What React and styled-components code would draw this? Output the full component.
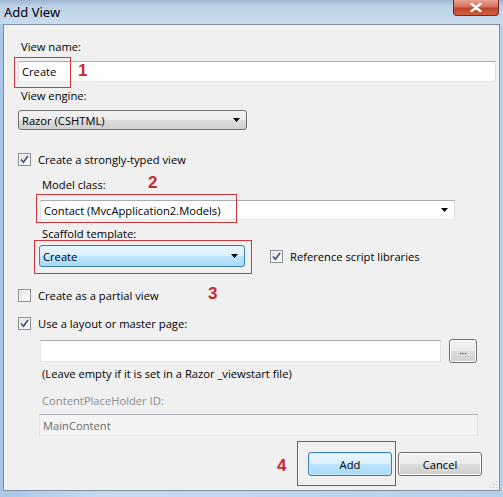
import React from 'react';
import styled, { createGlobalStyle, css } from 'styled-components';

const GlobalStyle = createGlobalStyle`
  html, body {
    margin: 0;
    padding: 0;
    background: #bcd2ea;
  }
  body {
    font-family: "Open Sans", "Noto Sans", sans-serif;
    font-size: 11.2px;
    color: #000;
  }
`;

const Window = styled.div`
  position: relative;
  width: 503px;
  height: 497px;
  display: flex;
  flex-direction: column;
  background: linear-gradient(90deg, #a9c6e6 0%, #c6daef 20%, #bfd5ec 60%, #b6cfe9 100%);
  overflow: hidden;
`;

const TitleBar = styled.div`
  height: 24px;
  display: flex;
  align-items: center;
  justify-content: space-between;
  padding-left: 4px;
  background: linear-gradient(180deg, #9fb5cf 0px, #bcd1e8 6px, #cadcf0 24px);
`;

const Title = styled.span`
  font-family: "Noto Sans", "Open Sans", sans-serif;
  font-size: 13px;
  margin-top: -1px;
`;

const CloseButton = styled.div`
  align-self: flex-start;
  width: 44px;
  height: 15px;
  margin-right: 4px;
  border: 1px solid #6b2a22;
  border-top: none;
  border-radius: 0 0 4px 4px;
  background: linear-gradient(180deg, #e8a393 0%, #d4735f 45%, #c0452d 55%, #d2603f 100%);
  display: flex;
  align-items: center;
  justify-content: center;
`;

const Panel = styled.div`
  position: relative;
  margin: 0 3px 6px 3px;
  flex: 1;
  border: 1px solid #7f8fa2;
  background: #f0f0f0;
  padding: 15px 14px 0 14px;
  display: flex;
  flex-direction: column;
`;

const Label = styled.div`
  height: 14px;
  line-height: 14px;
  margin-top: ${p => p.$top || 0}px;
  margin-left: ${p => (p.$indent ? 24 : 3)}px;
  color: ${p => (p.$disabled ? '#8d8d8d' : '#000')};
  white-space: nowrap;
`;

const TextBox = styled.div`
  box-sizing: border-box;
  height: ${p => p.$h || 21}px;
  width: ${p => p.$w}px;
  margin-top: ${p => p.$top || 0}px;
  margin-left: ${p => p.$left || 0}px;
  border: 1px solid #abadb3;
  border-color: #abadb3 #dbdfe6 #e3e9ef #e2e3ea;
  background: ${p => (p.$disabled ? '#f4f4f4' : '#fff')};
  color: ${p => (p.$disabled ? '#6d6d6d' : '#000')};
  display: flex;
  align-items: center;
  justify-content: space-between;
  padding: 0 6px 0 3px;
  white-space: nowrap;
`;

const Select = styled.div`
  box-sizing: border-box;
  height: ${p => p.$h || 21}px;
  width: ${p => p.$w}px;
  margin-top: ${p => p.$top || 0}px;
  margin-left: ${p => p.$left || 0}px;
  border-radius: 3px;
  display: flex;
  align-items: center;
  justify-content: space-between;
  padding: 0 6px 0 3px;
  ${p =>
    p.$active
      ? css`
          border: 1px solid #3c7fb1;
          background: linear-gradient(180deg, #eaf6fd 0%, #d9f0fc 50%, #bee6fd 51%, #a7d9f5 100%);
        `
      : css`
          border: 1px solid #707070;
          background: linear-gradient(180deg, #f2f2f2 0%, #ebebeb 50%, #dddddd 51%, #cfcfcf 100%);
        `}
`;

const Arrow = () => (
  <svg width="7" height="4" viewBox="0 0 7 4">
    <path d="M0 0h7L3.5 4z" fill="#000" />
  </svg>
);

const CheckRow = styled.div`
  display: flex;
  align-items: center;
  gap: 7px;
  height: 14px;
  margin-top: ${p => p.$top || 0}px;
  margin-left: ${p => p.$left || 0}px;
  white-space: nowrap;
`;

const Box = styled.span`
  box-sizing: border-box;
  width: 13px;
  height: 13px;
  border: 1px solid #8e8f8f;
  background: linear-gradient(135deg, #dcdcdc 0%, #f6f6f6 60%, #ffffff 100%);
  box-shadow: inset 0 0 0 1px #f4f4f4;
  display: flex;
  align-items: center;
  justify-content: center;
`;

const CheckBox = ({ checked, children }) => (
  <>
    <Box>
      {checked && (
        <svg width="9" height="9" viewBox="0 0 9 9">
          <path d="M1 4.5L3.5 7.2L8 1" fill="none" stroke="#3b4c7a" strokeWidth="1.6" />
        </svg>
      )}
    </Box>
    <span>{children}</span>
  </>
);

const Row = styled.div`
  display: flex;
  align-items: center;
  margin-top: ${p => p.$top || 0}px;
`;

const Button = styled.div`
  box-sizing: border-box;
  width: ${p => p.$w || 84}px;
  height: ${p => p.$h || 24}px;
  margin-left: ${p => p.$left || 0}px;
  border-radius: 3px;
  display: flex;
  align-items: center;
  justify-content: center;
  ${p =>
    p.$default
      ? css`
          border: 1px solid #3c7fb1;
          box-shadow: inset 0 0 0 1px #c6e7f9;
          background: linear-gradient(180deg, #eaf6fd 0%, #d9f0fc 50%, #bee6fd 51%, #a7d9f5 100%);
        `
      : css`
          border: 1px solid #707070;
          box-shadow: inset 0 0 0 1px #fcfcfc;
          background: linear-gradient(180deg, #f2f2f2 0%, #ebebeb 50%, #dddddd 51%, #cfcfcf 100%);
        `}
`;

const Dots = styled.span`
  font-size: 9px;
  margin-top: -2px;
`;

const Footer = styled.div`
  display: flex;
  justify-content: flex-end;
  margin-top: 16px;
  margin-right: 3px;
`;

const Grip = styled.div`
  position: absolute;
  right: 2px;
  bottom: 2px;
  width: 8px;
  height: 8px;
  background-image: radial-gradient(circle, #b8b8b8 0.8px, transparent 1px);
  background-size: 3px 3px;
  clip-path: polygon(100% 0, 100% 100%, 0 100%);
`;

/* red call-out frames and step numbers drawn over the dialog */
const Callout = styled.div`
  position: absolute;
  z-index: 2;
  left: ${p => p.$x}px;
  top: ${p => p.$y}px;
  width: ${p => p.$w}px;
  height: ${p => p.$h}px;
  border: 1px solid #d2383b;
  box-sizing: border-box;
  pointer-events: none;
`;

const Step = styled.span`
  position: absolute;
  z-index: 2;
  left: ${p => p.$x}px;
  top: ${p => p.$y}px;
  font-family: "Liberation Sans", Arial, sans-serif;
  font-weight: bold;
  font-size: 17px;
  line-height: 17px;
  color: #c8282d;
`;

export default function App() {
  return (
    <>
      <GlobalStyle />
      <Window>
        <TitleBar>
          <Title>Add View</Title>
          <CloseButton>
            <svg width="12" height="9" viewBox="0 0 12 9">
              <path d="M1.5 0.8L10.5 8.2M10.5 0.8L1.5 8.2" stroke="#fff" strokeWidth="2.4" strokeLinecap="round" />
            </svg>
          </CloseButton>
        </TitleBar>
        <Panel>
          <Label>View name:</Label>
          <TextBox $w={478} $top={7}>Create</TextBox>
          <Label $top={7}>View engine:</Label>
          <Select $w={229} $h={20} $top={7}>
            Razor (CSHTML)
            <Arrow />
          </Select>
          <CheckRow $top={22}>
            <CheckBox checked>Create a strongly-typed view</CheckBox>
          </CheckRow>
          <Label $indent $top={12}>Model class:</Label>
          <TextBox $w={415} $h={20} $left={22} $top={8}>
            Contact (MvcApplication2.Models)
            <Arrow />
          </TextBox>
          <Label $indent $top={7}>Scaffold template:</Label>
          <Row $top={4}>
            <Select $w={206} $h={22} $left={21} $active>
              Create
              <Arrow />
            </Select>
            <CheckRow $left={25}>
              <CheckBox checked>Reference script libraries</CheckBox>
            </CheckRow>
          </Row>
          <CheckRow $top={21}>
            <CheckBox>Create as a partial view</CheckBox>
          </CheckRow>
          <CheckRow $top={14}>
            <CheckBox checked>Use a layout or master page:</CheckBox>
          </CheckRow>
          <Row $top={9}>
            <TextBox $w={401} $h={22} $left={22} />
            <Button $w={28} $h={24} $left={8}>
              <Dots>...</Dots>
            </Button>
          </Row>
          <Label $indent $top={4}>(Leave empty if it is set in a Razor _viewstart file)</Label>
          <Label $indent $disabled $top={13}>ContentPlaceHolder ID:</Label>
          <TextBox $w={439} $h={22} $left={21} $top={6} $disabled>MainContent</TextBox>
          <Footer>
            <Button $default>Add</Button>
            <Button $left={6}>Cancel</Button>
          </Footer>
          <Grip />
        </Panel>

        <Callout $x={14} $y={57} $w={57} $h={31} />
        <Step $x={78} $y={62}>1</Step>
        <Callout $x={36} $y={194} $w={201} $h={29} />
        <Step $x={148} $y={174}>2</Step>
        <Callout $x={34} $y={240} $w={218} $h={34} />
        <Step $x={208} $y={285}>3</Step>
        <Callout $x={297} $y={441} $w={99} $h={45} />
        <Step $x={277} $y={457}>4</Step>
      </Window>
    </>
  );
}
